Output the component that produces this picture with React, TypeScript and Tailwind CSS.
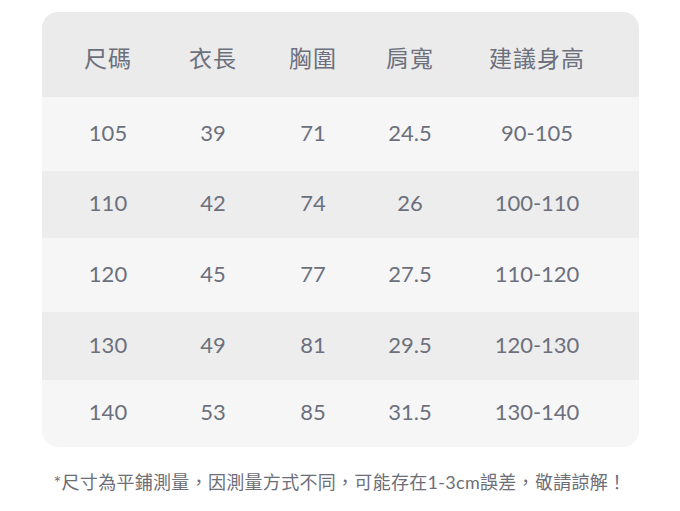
const headers = ["尺碼", "衣長", "胸圍", "肩寬", "建議身高"];

const rows = [
  { cells: ["105", "39", "71", "24.5", "90-105"], h: "h-[74px]", bg: "bg-[#f6f6f7]" },
  { cells: ["110", "42", "74", "26", "100-110"], h: "h-[67px]", bg: "bg-[#ededed]" },
  { cells: ["120", "45", "77", "27.5", "110-120"], h: "h-[74px]", bg: "bg-[#f6f6f7]" },
  { cells: ["130", "49", "81", "29.5", "120-130"], h: "h-[68px]", bg: "bg-[#ededed]" },
  { cells: ["140", "53", "85", "31.5", "130-140"], h: "h-[67px]", bg: "bg-[#f6f6f7]" },
];

const cols = "grid grid-cols-[132px_78px_122px_72px_182px] items-center";

export default function App() {
  return (
    <div className="w-[680px] h-[511px] bg-white font-['Lato','Noto_Sans_CJK_TC',sans-serif] text-[#6c707d]">
      <div className="pt-3 pl-[42px]">
        <div className="w-[597px] overflow-hidden rounded-2xl">
          <div className={`${cols} h-[85px] bg-[#ebebeb] text-[23px] pt-2`}>
            {headers.map((t) => (
              <div key={t} className="text-center tracking-[1px]">
                {t}
              </div>
            ))}
          </div>
          {rows.map((r) => (
            <div key={r.cells[0]} className={`${cols} ${r.h} ${r.bg} pb-1 text-[22px]`}>
              {r.cells.map((c, i) => (
                <div key={i} className="text-center">
                  {c}
                </div>
              ))}
            </div>
          ))}
        </div>
      </div>
      <p className="mt-[22px] text-center text-[18px] tracking-[0.3px] text-[#6d6e78]">
        *尺寸為平鋪測量，因測量方式不同，可能存在1-3cm誤差，敬請諒解！
      </p>
    </div>
  );
}
